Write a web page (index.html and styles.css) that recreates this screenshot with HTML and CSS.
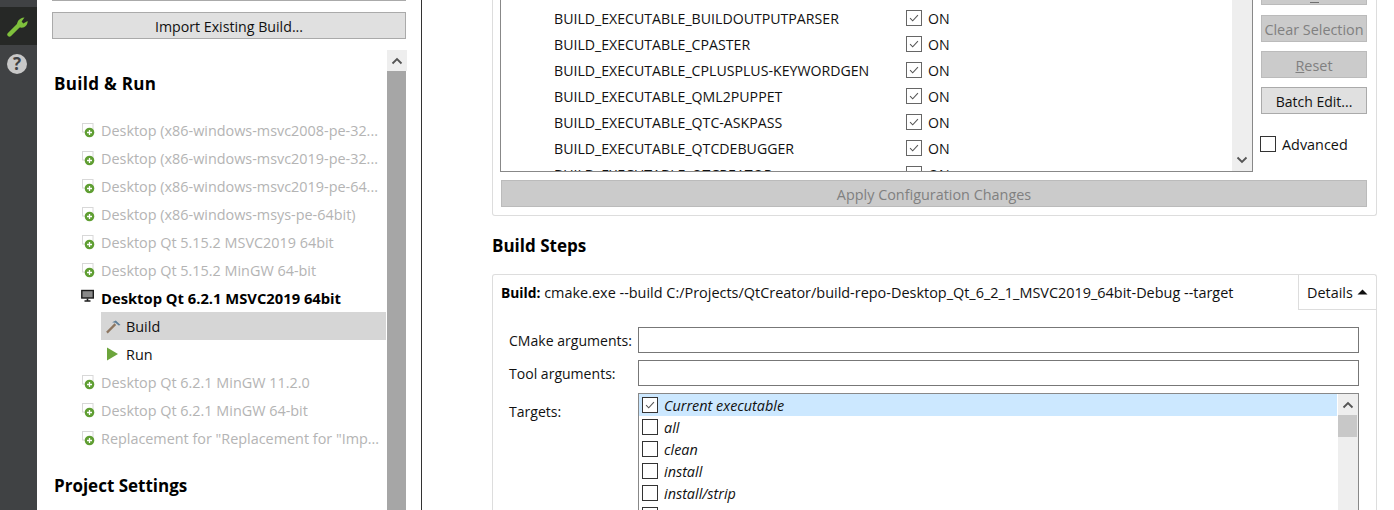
FILE: index.html
```html
<!DOCTYPE html>
<html lang="en">
<head>
<meta charset="utf-8">
<title>Projects</title>
<link rel="stylesheet" href="styles.css">
</head>
<body>
<svg class="defs" width="0" height="0" aria-hidden="true">
  <symbol id="kit" viewBox="0 0 15 16">
    <rect x="1.5" y="0.5" width="10.5" height="8.5" fill="#fff" stroke="#d8d8d8"/>
    <path d="M4 11h5" stroke="#d8d8d8"/>
    <circle cx="8.5" cy="9.5" r="4.8" fill="#5f9e32"/>
    <path d="M6 9.5h5M8.5 7v5" stroke="#fff" stroke-width="1.3"/>
  </symbol>
  <symbol id="check" viewBox="0 0 16 16">
    <path d="M3.5 8.2l3 3 6-6.4" fill="none" stroke="#555" stroke-width="1.2"/>
  </symbol>
</svg>
<div class="app">
  <nav class="rail">
    <div class="rail-item rail-active">
      <svg class="wrench" width="22" height="24" viewBox="0 0 22 24">
        <path d="M2.5 20.5L12.5 10.5" stroke="#7fc03c" stroke-width="4.4" stroke-linecap="round"/>
        <path d="M10.5 13C9 8 12 4 17.5 3.5L14.6 7.4 16.3 9.4 20.6 7C21 11.5 16.5 15 12.5 13.2Z" fill="#7fc03c"/>
      </svg>
    </div>
    <div class="rail-help"><span class="help-dot">?</span></div>
  </nav>

  <aside class="sidebar">
    <div class="sidebar-top"></div>
    <button class="btn import-btn">Import Existing Build...</button>
    <div class="tree-wrap">
      <div class="tree">
        <h2 class="tree-title run-title">Build &amp; Run</h2>
        <ul class="kits">
          <li class="kit"><svg class="kit-ic"><use href="#kit"/></svg><span>Desktop (x86-windows-msvc2008-pe-32...</span></li>
          <li class="kit"><svg class="kit-ic"><use href="#kit"/></svg><span>Desktop (x86-windows-msvc2019-pe-32...</span></li>
          <li class="kit"><svg class="kit-ic"><use href="#kit"/></svg><span>Desktop (x86-windows-msvc2019-pe-64...</span></li>
          <li class="kit"><svg class="kit-ic"><use href="#kit"/></svg><span>Desktop (x86-windows-msys-pe-64bit)</span></li>
          <li class="kit"><svg class="kit-ic"><use href="#kit"/></svg><span>Desktop Qt 5.15.2 MSVC2019 64bit</span></li>
          <li class="kit"><svg class="kit-ic"><use href="#kit"/></svg><span>Desktop Qt 5.15.2 MinGW 64-bit</span></li>
          <li class="kit kit-on">
            <svg class="kit-ic" viewBox="0 0 15 16">
              <rect x="0.8" y="1.5" width="11.5" height="7.5" fill="#8a8a8a" stroke="#1c1c1c" stroke-width="1.4"/>
              <path d="M6.5 9.5v2M3.5 12h6" stroke="#1c1c1c" stroke-width="1.6"/>
            </svg>
            <span>Desktop Qt 6.2.1 MSVC2019 64bit</span>
          </li>
          <li class="sub sub-on">
            <svg class="sub-ic" viewBox="0 0 16 16">
              <path d="M1 14.5L10 5.5" stroke="#8d7660" stroke-width="2.4"/>
              <path d="M6.5 3.5L10.5 1.5 15.5 6.5 13.5 7 10 4Z" fill="#5f7f98"/>
            </svg>
            <span>Build</span>
          </li>
          <li class="sub">
            <svg class="sub-ic" viewBox="0 0 15 15"><path d="M1 0.5L12 7 1 13.5Z" fill="#6ca53c"/></svg>
            <span>Run</span>
          </li>
          <li class="kit"><svg class="kit-ic"><use href="#kit"/></svg><span>Desktop Qt 6.2.1 MinGW 11.2.0</span></li>
          <li class="kit"><svg class="kit-ic"><use href="#kit"/></svg><span>Desktop Qt 6.2.1 MinGW 64-bit</span></li>
          <li class="kit"><svg class="kit-ic"><use href="#kit"/></svg><span>Replacement for "Replacement for "Imp...</span></li>
        </ul>
        <h2 class="tree-title settings-title">Project Settings</h2>
      </div>
      <div class="tree-scroll">
        <div class="tree-up"><svg width="12" height="8" viewBox="0 0 12 8"><path d="M1.5 6.5L6 2l4.5 4.5" fill="none" stroke="#555" stroke-width="1.8"/></svg></div>
        <div class="tree-thumb"></div>
      </div>
    </div>
  </aside>

  <main class="main">
    <section class="panel">
      <div class="panel-row">
        <div class="vars">
          <div class="vars-list">
            <div class="var"><span class="var-name">BUILD_EXECUTABLE_BUILDOUTPUTPARSER</span><span class="cb cb-soft"><svg><use href="#check"/></svg></span><span>ON</span></div>
            <div class="var"><span class="var-name">BUILD_EXECUTABLE_CPASTER</span><span class="cb cb-soft"><svg><use href="#check"/></svg></span><span>ON</span></div>
            <div class="var"><span class="var-name">BUILD_EXECUTABLE_CPLUSPLUS-KEYWORDGEN</span><span class="cb cb-soft"><svg><use href="#check"/></svg></span><span>ON</span></div>
            <div class="var"><span class="var-name">BUILD_EXECUTABLE_QML2PUPPET</span><span class="cb cb-soft"><svg><use href="#check"/></svg></span><span>ON</span></div>
            <div class="var"><span class="var-name">BUILD_EXECUTABLE_QTC-ASKPASS</span><span class="cb cb-soft"><svg><use href="#check"/></svg></span><span>ON</span></div>
            <div class="var"><span class="var-name">BUILD_EXECUTABLE_QTCDEBUGGER</span><span class="cb cb-soft"><svg><use href="#check"/></svg></span><span>ON</span></div>
            <div class="var"><span class="var-name">BUILD_EXECUTABLE_QTCREATOR</span><span class="cb cb-soft"><svg><use href="#check"/></svg></span><span>ON</span></div>
          </div>
          <div class="vars-scroll">
            <svg width="12" height="8" viewBox="0 0 12 8"><path d="M1.5 1.5L6 6l4.5-4.5" fill="none" stroke="#555" stroke-width="1.8"/></svg>
          </div>
        </div>
        <div class="side">
          <button class="btn btn-off btn-cut"><span class="cut-mark"></span></button>
          <button class="btn btn-off side-btn">Clear Selection</button>
          <button class="btn btn-off side-btn"><u>R</u>eset</button>
          <button class="btn side-btn batch">Batch Edit...</button>
          <label class="advanced"><span class="cb"></span><span>Advanced</span></label>
        </div>
      </div>
      <button class="btn btn-off apply">Apply Configuration Changes</button>
    </section>

    <h2 class="steps-title">Build Steps</h2>

    <section class="card">
      <header class="card-head">
        <div class="card-summary"><b>Build:</b> cmake.exe --build C:/Projects/QtCreator/build-repo-Desktop_Qt_6_2_1_MSVC2019_64bit-Debug --target</div>
        <div class="details">Details <svg width="11" height="6" viewBox="0 0 11 6"><path d="M0.5 5.5L5.5 0.5 10.5 5.5Z" fill="#111"/></svg></div>
      </header>
      <div class="form">
        <label class="lbl">CMake arguments:</label>
        <div class="field"></div>
        <label class="lbl">Tool arguments:</label>
        <div class="field"></div>
        <label class="lbl lbl-targets">Targets:</label>
        <div class="targets">
          <div class="target-list">
            <div class="target target-on"><span class="cb"><svg><use href="#check"/></svg></span><i>Current executable</i></div>
            <div class="target"><span class="cb"></span><i>all</i></div>
            <div class="target"><span class="cb"></span><i>clean</i></div>
            <div class="target"><span class="cb"></span><i>install</i></div>
            <div class="target"><span class="cb"></span><i>install/strip</i></div>
            <div class="target"><span class="cb"></span><i></i></div>
          </div>
          <div class="targets-scroll">
            <div class="targets-up"><svg width="12" height="8" viewBox="0 0 12 8"><path d="M1.5 6.5L6 2l4.5 4.5" fill="none" stroke="#555" stroke-width="1.8"/></svg></div>
            <div class="targets-thumb"></div>
          </div>
        </div>
      </div>
    </section>
  </main>
</div>
</body>
</html>
```

FILE: styles.css
```css
* { box-sizing: border-box; }
html, body { margin: 0; padding: 0; height: 510px; overflow: hidden; background: #fff; }
body { font-family: "Open Sans", "Noto Sans", sans-serif; font-size: 14.4px; color: #111; }
.defs { display: block; height: 0; }
ul { list-style: none; margin: 0; padding: 0; }
h2 { margin: 0; font-size: 17px; line-height: 24px; font-weight: 700; color: #000; }

.app { display: flex; height: 510px; overflow: hidden; }

.rail { width: 37px; flex: none; background: #404244; padding-top: 7px; }
.rail-item { height: 38px; background: #262826; display: flex; align-items: center; justify-content: center; padding-right: 1px; }
.rail-help { height: 38px; display: flex; align-items: center; justify-content: center; padding-right: 3px; }
.help-dot { width: 20px; height: 20px; border-radius: 50%; background: #c8c8c8; color: #404244; font-weight: 700; font-size: 17px; line-height: 20px; text-align: center; }

.sidebar { width: 385px; flex: none; border-right: 1px solid #333; padding: 0 15px; display: flex; flex-direction: column; }
.sidebar-top { height: 1px; background: #aaa; }
.btn { display: block; font: inherit; color: #111; background: #e0e0e0; border: 1px solid #aaa; padding: 1px 0 0; text-align: center; white-space: nowrap; }
.btn-off { background: #cbcbcb; border-color: #bbb; color: #808080; }
.import-btn { margin-top: 11px; height: 27px; width: 100%; flex: none; font-size: 14.2px; }

.tree-wrap { margin: 11px -1px 0 0; flex: 1; display: flex; min-height: 0; }
.tree { flex: 1; padding: 22px 0 0 2px; min-width: 0; }
.run-title { letter-spacing: 0.3px; }
.kits { margin-top: 20px; }
.kit, .sub { height: 28px; display: flex; align-items: center; white-space: nowrap; }
.kit { color: #b4b4b4; margin-left: 27px; }
.kit-ic { width: 15px; height: 16px; flex: none; margin-right: 5px; margin-top: 2px; }
.kit-on { color: #000; font-weight: 700; font-size: 14.75px; }
.kit-on .kit-ic { margin-top: -2px; }
.sub { margin: 0 1px 0 47px; padding-left: 5px; }
.sub-on { background: #d6d6d6; }
.sub-ic { width: 15px; height: 15px; margin-right: 5px; flex: none; }
.settings-title { margin-top: 22px; }

.tree-scroll { width: 20px; flex: none; }
.tree-up { height: 21px; background: #eee; display: flex; align-items: center; justify-content: center; }
.tree-thumb { width: 19px; height: 440px; background: #a6a6a6; }

.main { flex: 1; padding-left: 70px; min-width: 0; }
.panel { width: 885px; height: 216px; border: 1px solid #ddd; border-top: 0; border-radius: 0 0 3px 3px; padding: 0 9px 0 7px; }
.panel-row { display: flex; gap: 8px; height: 180px; }
.vars { width: 753px; height: 172px; border: 1px solid #888; border-top: 0; display: flex; overflow: hidden; font-size: 14.15px; }
.vars-list { flex: 1; padding: 5px 0 0 53px; overflow: hidden; }
.var { height: 26px; display: flex; align-items: center; }
.var-name { width: 352px; flex: none; white-space: nowrap; }
.vars-scroll { width: 20px; flex: none; background: #eee; display: flex; align-items: flex-end; justify-content: center; padding-bottom: 7px; }

.cb { width: 16px; height: 16px; flex: none; border: 1px solid #333; background: #fff; display: block; margin-right: 6px; }
.cb svg { width: 14px; height: 14px; display: block; }
.cb-soft { border-color: #666; }

.side { width: 106px; flex: none; display: flex; flex-direction: column; }
.btn-cut { height: 5px; border-top: 0; padding: 0; overflow: hidden; }
.cut-mark { display: block; width: 9px; height: 1px; background: #707070; margin: 0 auto; }
.side-btn { height: 27px; margin-top: 9px; }
.side-btn:nth-child(2) { margin-top: 10px; }
.batch { font-size: 14px; }
.advanced { display: flex; align-items: center; margin: 22px 0 0 -1px; height: 16px; }

.apply { width: 866px; height: 27px; margin-left: 1px; }

.steps-title { margin: 18px 0 16px; width: 885px; }

.card { width: 885px; height: 260px; border: 1px solid #ddd; border-radius: 3px 3px 0 0; border-bottom: 0; }
.card-head { display: flex; height: 35px; }
.card-summary { flex: 1; padding: 0 0 0 8px; line-height: 36px; white-space: nowrap; color: #111; font-size: 14.45px; }
.card-summary b { color: #000; font-size: 13.8px; }
.details { width: 78px; flex: none; border-left: 1px solid #ddd; border-bottom: 1px solid #ddd; display: flex; align-items: center; gap: 4px; padding-left: 8px; }

.form { display: grid; grid-template-columns: 129px 721px; grid-template-rows: 26px 26px auto; row-gap: 7px; padding: 17px 0 0 16px; }
.lbl { line-height: 28px; white-space: nowrap; font-size: 14.05px; }
.lbl-targets { line-height: 38px; }
.field { height: 26px; border: 1px solid #777; }
.targets { height: 130px; border: 1px solid #888; border-bottom: 0; display: flex; overflow: hidden; }
.target-list { flex: 1; }
.target { height: 22px; display: flex; align-items: center; padding-left: 3px; }
.target .cb { margin-right: 6px; }
.target-on { background: #cce8ff; }
.targets-scroll { width: 21px; flex: none; background: #eee; border-left: 1px solid #fff; padding-right: 1px; }
.targets-up { height: 21px; display: flex; align-items: center; justify-content: center; }
.targets-thumb { height: 22px; background: #c8c8c8; }
```
